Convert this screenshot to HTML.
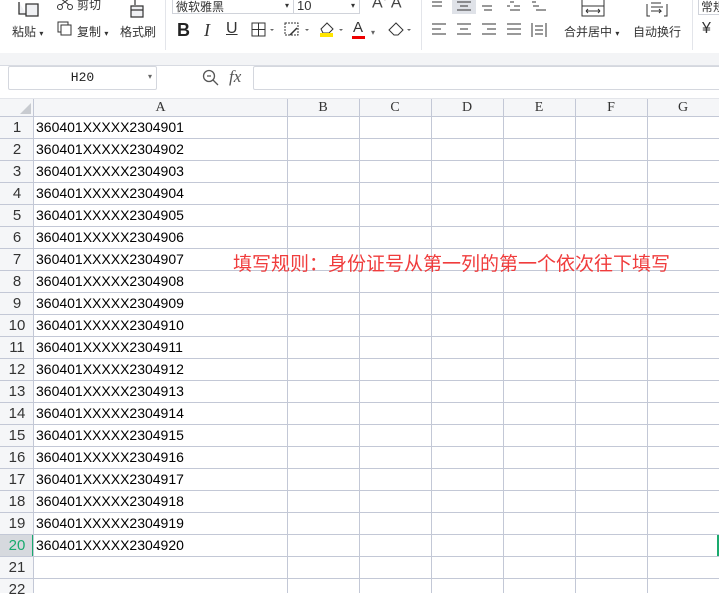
<!DOCTYPE html>
<html><head><meta charset="utf-8"><style>
*{margin:0;padding:0;box-sizing:border-box}
body{width:719px;height:593px;overflow:hidden;background:#fff;font-family:"Liberation Sans","Noto Sans CJK SC",sans-serif;position:relative;color:#333}
.a{position:absolute}
.t{font-size:12px;color:#333;white-space:nowrap}
.hl{position:absolute;left:0;width:719px;height:1px;background:#c3c8d6}
.vl{position:absolute;top:99px;height:494px;width:1px;background:#c3c8d6}
.rn{position:absolute;left:0;width:34px;text-align:center;font-size:15px;color:#333;font-family:"Liberation Sans",sans-serif}
.cell{position:absolute;left:36px;font-size:14px;color:#000}
.ch{position:absolute;top:99px;height:17px;font-family:"Liberation Serif",serif;font-size:14px;text-align:center;line-height:18px;color:#333}
</style></head><body>
<div class="a" style="left:0;top:0;width:719px;height:53px;background:#fff"></div>
<div class="a" style="left:0;top:53px;width:719px;height:13px;background:#f3f4f6;border-bottom:1px solid #d8dbe2"></div>
<div class="a" style="left:165px;top:0;width:1px;height:50px;background:#e3e5ea"></div>
<div class="a" style="left:421px;top:0;width:1px;height:50px;background:#e3e5ea"></div>
<div class="a" style="left:692px;top:0;width:1px;height:50px;background:#e3e5ea"></div>
<svg class="a" style="left:18px;top:0" width="24" height="18"><path d="M1 2v12h7M8 4h12v12H8z" fill="#f0f1f4" stroke="#333" stroke-width="1.3"/></svg>
<div class="a t" style="left:12px;top:23px">粘贴 <span style="font-size:8px">▾</span></div>
<svg class="a" style="left:56px;top:0" width="20" height="12"><circle cx="4" cy="7" r="2.5" fill="none" stroke="#333"/><circle cx="14" cy="7" r="2.5" fill="none" stroke="#333"/><path d="M5 5l9-7M13 5L4-2" stroke="#333"/></svg>
<div class="a t" style="left:77px;top:-4px">剪切</div>
<svg class="a" style="left:57px;top:21px" width="16" height="16"><rect x="1" y="1" width="10" height="10" fill="none" stroke="#333"/><rect x="4" y="4" width="10" height="10" fill="#fff" stroke="#333"/></svg>
<div class="a t" style="left:77px;top:23px">复制 <span style="font-size:8px">▾</span></div>
<svg class="a" style="left:128px;top:0" width="20" height="18"><path d="M7 0v5M3 6h12v11H3z M3 10h12" fill="#f0f1f4" stroke="#333" stroke-width="1.2"/></svg>
<div class="a t" style="left:120px;top:23px">格式刷</div>
<div class="a" style="left:172px;top:-2px;width:122px;height:16px;border:1px solid #d0d3da;border-top:none;font-size:12px;padding-left:3px;color:#333">微软雅黑<span style="position:absolute;right:4px;font-size:8px;top:3px">▾</span></div>
<div class="a" style="left:294px;top:-2px;width:66px;height:16px;border:1px solid #d0d3da;border-top:none;border-left:none;font-size:13px;padding-left:3px;color:#333">10<span style="position:absolute;right:4px;font-size:8px;top:3px">▾</span></div>
<div class="a" style="left:372px;top:-6px;font-size:16px;color:#444">A<sup style="font-size:8px">+</sup> A</div>
<div class="a" style="left:177px;top:20px;font-size:18px;font-weight:bold;color:#222">B</div>
<div class="a" style="left:204px;top:20px;font-size:18px;font-style:italic;font-family:'Liberation Serif',serif;color:#333">I</div>
<div class="a" style="left:226px;top:20px;font-size:16px;text-decoration:underline;color:#333">U</div>
<svg class="a" style="left:251px;top:22px" width="26" height="16"><rect x="1" y="1" width="13" height="13" fill="none" stroke="#333"/><path d="M7.5 1v13M1 7.5h13" stroke="#333"/><path d="M19 7l2 2 2-2z" fill="#666"/></svg>
<svg class="a" style="left:284px;top:22px" width="28" height="16"><rect x="1" y="1" width="13" height="12" fill="none" stroke="#333" stroke-dasharray="2 1"/><path d="M6 13l7-7" stroke="#333" stroke-width="1.5"/><path d="M21 7l2 2 2-2z" fill="#666"/></svg>
<svg class="a" style="left:318px;top:20px" width="28" height="18"><path d="M3 9l6-6 6 6-4 4H5z" fill="#fff" stroke="#333"/><rect x="2" y="13" width="13" height="4" fill="#ffe500"/><path d="M21 9l2 2 2-2z" fill="#666"/></svg>
<div class="a" style="left:353px;top:19px;font-size:15px;color:#333">A</div>
<div class="a" style="left:352px;top:36px;width:13px;height:3px;background:#e00"></div>
<div class="a" style="left:371px;top:28px;font-size:8px;color:#666">▾</div>
<svg class="a" style="left:386px;top:20px" width="30" height="18"><path d="M3 10l7-7 7 7-5 5H8z" fill="#fff" stroke="#333"/><path d="M21 9l2 2 2-2z" fill="#666"/></svg>
<svg class="a" style="left:430px;top:0" width="120" height="14"><g stroke="#333"><path d="M2 2h10M2 6h10"/><rect x="22" y="-2" width="24" height="17" fill="#dfe2e8" stroke="none"/><path d="M27 2h14M30 6h8M27 10h14"/><path d="M52 6h10M54 10h8"/><path d="M80 2h4M77 6h3M84 6h6M80 10h10"/><path d="M102 2h4M106 6l3-0M103 6h4M106 10h10"/></g></svg>
<svg class="a" style="left:430px;top:22px" width="120" height="16"><g stroke="#333"><path d="M2 2h14M2 7h9M2 12h14"/><path d="M27 2h14M30 7h8M27 12h14"/><path d="M52 2h14M57 7h9M52 12h14"/><path d="M77 2h14M77 7h14M77 12h14"/><path d="M102 1v14M116 1v14M105 4h8M105 8h8M105 12h8"/></g></svg>
<svg class="a" style="left:580px;top:0" width="26" height="18"><path d="M2 0v16h22V0M2 6h22M6 11h14M6 11l2-2M6 11l2 2M20 11l-2-2M20 11l-2 2" fill="none" stroke="#333"/></svg>
<div class="a t" style="left:564px;top:23px">合并居中 <span style="font-size:8px">▾</span></div>
<svg class="a" style="left:645px;top:0" width="24" height="18"><path d="M2 4v12h3M22 4v12h-3M6 3h10M6 7h12M6 11h10l-2-2M16 11l-2 2" fill="none" stroke="#333"/></svg>
<div class="a t" style="left:633px;top:23px">自动换行</div>
<div class="a" style="left:698px;top:-3px;width:30px;height:18px;border:1px solid #d0d3da;font-size:12px;padding-left:2px">常规</div>
<div class="a" style="left:702px;top:20px;font-size:16px;color:#333">¥</div>
<div class="a" style="left:0;top:66px;width:719px;height:33px;background:#fff;border-bottom:1px solid #e3e5ea"></div>
<div class="a" style="left:8px;top:66px;width:149px;height:24px;border:1px solid #d4d7de;border-radius:2px;font-family:'Liberation Mono',monospace;font-size:13px;text-align:center;line-height:22px;color:#222">H20<span style="position:absolute;right:4px;font-size:8px;color:#666">▾</span></div>
<svg class="a" style="left:202px;top:69px" width="18" height="18"><circle cx="7" cy="7" r="5.5" fill="none" stroke="#555" stroke-width="1.3"/><path d="M5 7h4M11 11l5 5" stroke="#555" stroke-width="1.3"/></svg>
<div class="a" style="left:229px;top:67px;font-family:'Liberation Serif',serif;font-style:italic;font-size:17px;color:#555">fx</div>
<div class="a" style="left:253px;top:66px;width:470px;height:24px;border:1px solid #d4d7de;border-radius:2px"></div>
<div class="a" style="left:0;top:99px;width:719px;height:17px;background:#f5f6f8"></div>
<div class="a" style="left:0;top:99px;width:34px;height:494px;background:#f5f6f8"></div>
<svg class="a" style="left:20px;top:103px" width="12" height="12"><path d="M11 0v11H0z" fill="#c8cbd0"/></svg>
<div class="ch" style="left:34px;width:253px">A</div>
<div class="ch" style="left:287px;width:72px">B</div>
<div class="ch" style="left:359px;width:72px">C</div>
<div class="ch" style="left:431px;width:72px">D</div>
<div class="ch" style="left:503px;width:72px">E</div>
<div class="ch" style="left:575px;width:72px">F</div>
<div class="ch" style="left:647px;width:72px">G</div>
<div class="a" style="left:0;top:534px;width:34px;height:22px;background:#d6d9de"></div>
<div class="a" style="left:32px;top:534px;width:2px;height:22px;background:#1aaa6e"></div>
<div class="a" style="left:717px;top:534px;width:2px;height:23px;background:#1aaa6e"></div>
<div class="hl" style="top:116px"></div>
<div class="hl" style="top:138px"></div><div class="hl" style="top:160px"></div><div class="hl" style="top:182px"></div><div class="hl" style="top:204px"></div><div class="hl" style="top:226px"></div><div class="hl" style="top:248px"></div><div class="hl" style="top:270px"></div><div class="hl" style="top:292px"></div><div class="hl" style="top:314px"></div><div class="hl" style="top:336px"></div><div class="hl" style="top:358px"></div><div class="hl" style="top:380px"></div><div class="hl" style="top:402px"></div><div class="hl" style="top:424px"></div><div class="hl" style="top:446px"></div><div class="hl" style="top:468px"></div><div class="hl" style="top:490px"></div><div class="hl" style="top:512px"></div><div class="hl" style="top:534px"></div><div class="hl" style="top:556px"></div><div class="hl" style="top:578px"></div>
<div class="vl" style="left:33px"></div><div class="vl" style="left:287px"></div><div class="vl" style="left:359px"></div><div class="vl" style="left:431px"></div><div class="vl" style="left:503px"></div><div class="vl" style="left:575px"></div><div class="vl" style="left:647px"></div>
<div class="rn" style="top:119px">1</div><div class="cell" style="top:119px">360401XXXXX2304901</div>
<div class="rn" style="top:141px">2</div><div class="cell" style="top:141px">360401XXXXX2304902</div>
<div class="rn" style="top:163px">3</div><div class="cell" style="top:163px">360401XXXXX2304903</div>
<div class="rn" style="top:185px">4</div><div class="cell" style="top:185px">360401XXXXX2304904</div>
<div class="rn" style="top:207px">5</div><div class="cell" style="top:207px">360401XXXXX2304905</div>
<div class="rn" style="top:229px">6</div><div class="cell" style="top:229px">360401XXXXX2304906</div>
<div class="rn" style="top:251px">7</div><div class="cell" style="top:251px">360401XXXXX2304907</div>
<div class="rn" style="top:273px">8</div><div class="cell" style="top:273px">360401XXXXX2304908</div>
<div class="rn" style="top:295px">9</div><div class="cell" style="top:295px">360401XXXXX2304909</div>
<div class="rn" style="top:317px">10</div><div class="cell" style="top:317px">360401XXXXX2304910</div>
<div class="rn" style="top:339px">11</div><div class="cell" style="top:339px">360401XXXXX2304911</div>
<div class="rn" style="top:361px">12</div><div class="cell" style="top:361px">360401XXXXX2304912</div>
<div class="rn" style="top:383px">13</div><div class="cell" style="top:383px">360401XXXXX2304913</div>
<div class="rn" style="top:405px">14</div><div class="cell" style="top:405px">360401XXXXX2304914</div>
<div class="rn" style="top:427px">15</div><div class="cell" style="top:427px">360401XXXXX2304915</div>
<div class="rn" style="top:449px">16</div><div class="cell" style="top:449px">360401XXXXX2304916</div>
<div class="rn" style="top:471px">17</div><div class="cell" style="top:471px">360401XXXXX2304917</div>
<div class="rn" style="top:493px">18</div><div class="cell" style="top:493px">360401XXXXX2304918</div>
<div class="rn" style="top:515px">19</div><div class="cell" style="top:515px">360401XXXXX2304919</div>
<div class="rn" style="top:537px;color:#1aaa6e">20</div><div class="cell" style="top:537px">360401XXXXX2304920</div>
<div class="rn" style="top:559px">21</div>
<div class="rn" style="top:581px">22</div>
<div class="a" style="left:233px;top:249px;font-size:19px;letter-spacing:0;color:#f03c3c;white-space:nowrap;font-family:'Liberation Sans','Noto Sans CJK SC',sans-serif">填写规则：身份证号从第一列的第一个依次往下填写</div>
</body></html>
